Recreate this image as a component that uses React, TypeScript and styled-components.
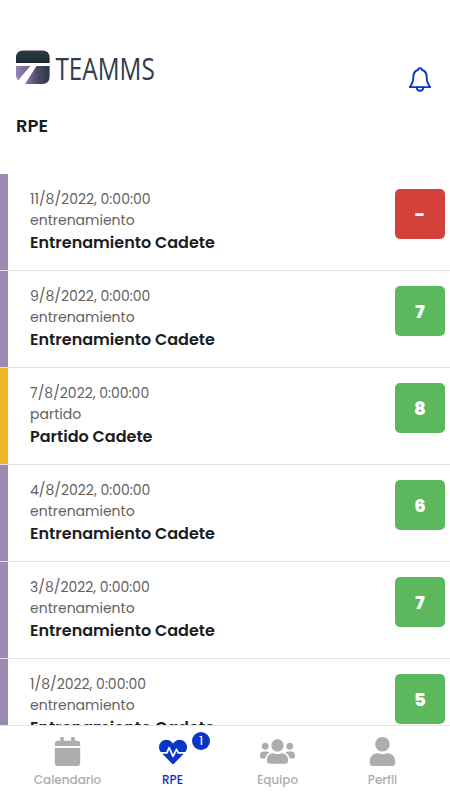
import React from 'react';
import styled, { createGlobalStyle } from 'styled-components';
import { FaCalendar, FaHeartbeat, FaUsers, FaUser } from 'react-icons/fa';

const GlobalStyle = createGlobalStyle`
  * { box-sizing: border-box; }
  body {
    margin: 0;
    background: #fff;
    font-family: Poppins, Inter, sans-serif;
    color: #1c1c1e;
    -webkit-font-smoothing: antialiased;
  }
`;

const Screen = styled.div`
  display: flex;
  flex-direction: column;
  height: 800px;
  overflow: hidden;
`;

const Header = styled.header`
  display: flex;
  justify-content: space-between;
  height: 174px;
  flex: none;
  padding: 46px 16px 0 12px;
`;

const Brand = styled.div`
  display: flex;
  flex-direction: column;
`;

const Heading = styled.h1`
  margin: 26px 0 0 4px;
  font-size: 18px;
  line-height: 24px;
  font-weight: 600;
`;

const BellButton = styled.button`
  display: flex;
  width: 28px;
  height: 28px;
  margin-top: 19px;
  padding: 0;
  border: 0;
  background: none;
  color: #0a36c8;
`;

const List = styled.main`
  flex: 1;
  min-height: 0;
  overflow: hidden;
`;

const Row = styled.article`
  display: flex;
  height: 97px;
  border-bottom: 1px solid #e3e3e3;
`;

const Stripe = styled.div<{ $color: string }>`
  width: 8px;
  background: ${({ $color }) => $color};
`;

const Details = styled.div`
  flex: 1;
  padding: 15px 0 0 22px;
`;

const Meta = styled.div`
  font-size: 14px;
  line-height: 21px;
  color: #626262;
`;

const Title = styled.div`
  font-size: 16px;
  line-height: 24px;
  font-weight: 600;
`;

const Score = styled.div<{ $pending: boolean }>`
  display: flex;
  align-items: center;
  justify-content: center;
  width: 50px;
  height: 50px;
  margin: 15px 5px 0 0;
  border-radius: 5px;
  background: ${({ $pending }) => ($pending ? '#d4403a' : '#5cb85c')};
  color: #fff;
  font-size: 18px;
  font-weight: 800;
`;

const Nav = styled.nav`
  display: flex;
  flex: none;
  height: 75px;
  padding: 0 15px;
  border-top: 1px solid #e3e3e3;
  background: #fff;
`;

const Tab = styled.a<{ $active?: boolean }>`
  position: relative;
  display: flex;
  flex-direction: column;
  align-items: center;
  width: 105px;
  padding-top: 11px;
  color: ${({ $active }) => ($active ? '#0a36c8' : '#adadad')};
`;

const IconBox = styled.span`
  display: flex;
  align-items: center;
  justify-content: center;
  height: 29px;
`;

const TabLabel = styled.span`
  margin-top: 5px;
  font-size: 12px;
  line-height: 18px;
  font-weight: 500;
`;

const Count = styled.span`
  position: absolute;
  top: 6px;
  left: 72px;
  width: 18px;
  height: 18px;
  border-radius: 50%;
  background: #0a36c8;
  color: #fff;
  font-size: 13px;
  line-height: 18px;
  text-align: center;
`;

const Logo = () => (
  <svg width="146" height="42" viewBox="0 0 146 42" role="img" aria-label="TEAMMS">
    <defs>
      <linearGradient id="top" x1="0" y1="0" x2="0" y2="1">
        <stop offset="0" stopColor="#2a3b45" />
        <stop offset="1" stopColor="#1c2930" />
      </linearGradient>
      <linearGradient id="left" x1="0" y1="0" x2="1" y2="0">
        <stop offset="0" stopColor="#9686b3" />
        <stop offset="1" stopColor="#6a6084" />
      </linearGradient>
      <linearGradient id="right" x1="0" y1="0" x2="1" y2="0">
        <stop offset="0" stopColor="#8a7ba8" />
        <stop offset="0.5" stopColor="#4c4a66" />
        <stop offset="1" stopColor="#2a3944" />
      </linearGradient>
    </defs>
    <path d="M4 17V12q0-7.4 7.4-7.4h18.8q7.4 0 7.4 7.4v5Z" fill="url(#top)" />
    <path d="M4 20h14.3L6.2 34.2Q4 32 4 29Z" fill="url(#left)" />
    <path d="M24.5 20h13.1v10.6q0 7.400-7.400 7.400H13Z" fill="url(#right)" />
    <text x="43.500" y="33.700" fontFamily="'Open Sans', sans-serif" fontSize="31" fontWeight="400" fill="#303d4b" textLength="99.200" lengthAdjust="spacingAndGlyphs">TEAMMS</text>
  </svg>
);

const Bell = () => (
  <svg width="28" height="28" viewBox="0 0 28 28" fill="none" stroke="currentColor" strokeWidth="1.900" strokeLinejoin="round" strokeLinecap="round">
    <path d="M14 3.300c-1.100 0-1.900.7-2.100 1.700C8.700 6 7.300 8.500 7.300 12c0 5.300-1.300 7.400-3.500 10.100h20.400c-2.200-2.700-3.500-4.800-3.500-10.100 0-3.500-1.400-6-4.600-7C15.900 4 15.100 3.300 14 3.300Z" />
    <path d="M10.600 22.500c.2 2.200 1.500 3.300 3.400 3.300s3.200-1.100 3.400-3.300" />
  </svg>
);

const PURPLE = '#9b89b3';
const AMBER = '#efb526';

const sessions = [
  { date: '11/8/2022, 0:00:00', match: false, score: '-' },
  { date: '9/8/2022, 0:00:00', match: false, score: '7' },
  { date: '7/8/2022, 0:00:00', match: true, score: '8' },
  { date: '4/8/2022, 0:00:00', match: false, score: '6' },
  { date: '3/8/2022, 0:00:00', match: false, score: '7' },
  { date: '1/8/2022, 0:00:00', match: false, score: '5' },
];

export default function App() {
  return (
    <Screen>
      <GlobalStyle />
      <Header>
        <Brand>
          <Logo />
          <Heading>RPE</Heading>
        </Brand>
        <BellButton aria-label="Notificaciones"><Bell /></BellButton>
      </Header>
      <List>
        {sessions.map(({ date, match, score }) => (
          <Row key={date}>
            <Stripe $color={match ? AMBER : PURPLE} />
            <Details>
              <Meta>{date}</Meta>
              <Meta>{match ? 'partido' : 'entrenamiento'}</Meta>
              <Title>{match ? 'Partido Cadete' : 'Entrenamiento Cadete'}</Title>
            </Details>
            <Score $pending={score === '-'}>{score}</Score>
          </Row>
        ))}
      </List>
      <Nav>
        <Tab>
          <IconBox><FaCalendar size={29} /></IconBox>
          <TabLabel>Calendario</TabLabel>
        </Tab>
        <Tab $active>
          <IconBox><FaHeartbeat size={28} /></IconBox>
          <TabLabel>RPE</TabLabel>
          <Count>1</Count>
        </Tab>
        <Tab>
          <IconBox><FaUsers size={35} /></IconBox>
          <TabLabel>Equipo</TabLabel>
        </Tab>
        <Tab>
          <IconBox><FaUser size={29} /></IconBox>
          <TabLabel>Perfil</TabLabel>
        </Tab>
      </Nav>
    </Screen>
  );
}
